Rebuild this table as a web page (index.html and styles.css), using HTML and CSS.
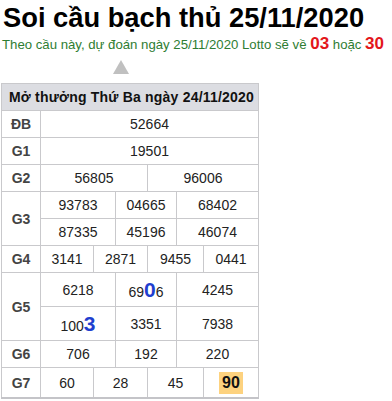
FILE: index.html
```html
<!DOCTYPE html>
<html lang="vi">
<head>
<meta charset="utf-8">
<title>Soi cầu bạch thủ 25/11/2020</title>
<link rel="stylesheet" href="styles.css">
</head>
<body>
<h1 class="title">Soi cầu bạch thủ 25/11/2020</h1>
<p class="predict">Theo cầu này, dự đoán ngày 25/11/2020 Lotto sẽ về <b class="hot">03</b> hoặc <b class="hot">30</b></p>
<div class="arrow"></div>
<table class="kq">
  <colgroup>
    <col class="c-lbl"><col class="c1"><col class="c2"><col class="c3"><col class="c4"><col class="c5"><col class="c6">
  </colgroup>
  <thead>
    <tr><th colspan="7">Mở thưởng Thứ Ba ngày 24/11/2020</th></tr>
  </thead>
  <tbody>
    <tr><td class="lbl">ĐB</td><td colspan="6">52664</td></tr>
    <tr><td class="lbl">G1</td><td colspan="6">19501</td></tr>
    <tr><td class="lbl">G2</td><td colspan="3">56805</td><td colspan="3">96006</td></tr>
    <tr><td class="lbl" rowspan="2">G3</td><td colspan="2">93783</td><td colspan="2">04665</td><td colspan="2">68402</td></tr>
    <tr><td colspan="2">87335</td><td colspan="2">45196</td><td colspan="2">46074</td></tr>
    <tr><td class="lbl">G4</td><td>3141</td><td colspan="2">2871</td><td colspan="2">9455</td><td>0441</td></tr>
    <tr class="tall"><td class="lbl" rowspan="2">G5</td><td colspan="2">6218</td><td colspan="2">69<b class="mark">0</b>6</td><td colspan="2">4245</td></tr>
    <tr class="tall"><td colspan="2">100<b class="mark">3</b></td><td colspan="2">3351</td><td colspan="2">7938</td></tr>
    <tr><td class="lbl">G6</td><td colspan="2">706</td><td colspan="2">192</td><td colspan="2">220</td></tr>
    <tr class="last"><td class="lbl">G7</td><td>60</td><td colspan="2">28</td><td colspan="2">45</td><td><b class="hit">90</b></td></tr>
  </tbody>
</table>
</body>
</html>
```
FILE: styles.css
```css
html, body {
  margin: 0;
  padding: 0;
  background: #fff;
}
body {
  font-family: Arial, "Liberation Sans", sans-serif;
  color: #222;
}
.title {
  margin: 0;
  padding: 3px 0 0 3px;
  font-size: 27.3px;
  line-height: 30px;
  font-weight: bold;
  color: #000;
}
.predict {
  margin: 0;
  padding: 0 0 0 2px;
  font-size: 13.2px;
  line-height: 22px;
  color: #2e7d32;
}
.hot {
  color: #e3161b;
  font-size: 17px;
}
.arrow {
  width: 0;
  height: 0;
  margin: 4px 0 0 113px;
  border-left: 8px solid transparent;
  border-right: 8px solid transparent;
  border-bottom: 14px solid #c0c0c0;
}
.kq {
  margin: 9px 0 0 1px;
  border-collapse: collapse;
  table-layout: fixed;
  width: 257px;
  font-size: 14px;
}
.c-lbl { width: 39px; }
.c1 { width: 53px; }
.c2 { width: 22px; }
.c3 { width: 32px; }
.c4 { width: 29px; }
.c5 { width: 27px; }
.c6 { width: 55px; }
.kq th, .kq td {
  border: 1px solid #c9c9cc;
  padding: 0;
  text-align: center;
  height: 26px;
}
.kq th {
  background: #dcdde2;
  text-align: left;
  padding-left: 7px;
  font-size: 14px;
  letter-spacing: 0.2px;
  color: #111;
}
.kq td {
  color: #222;
}
.kq td.lbl {
  font-weight: bold;
  color: #444;
}
.kq tr.tall td {
  height: 33px;
}
.kq tr.last td {
  height: 29px;
  border-bottom: 2px solid #c4c4c8;
}
.mark {
  color: #1f3fcf;
  font-size: 21px;
}
.hit {
  display: inline-block;
  padding: 2px 3px;
  background: #fdd27f;
  color: #111;
  font-size: 16px;
  line-height: 18px;
}
```
